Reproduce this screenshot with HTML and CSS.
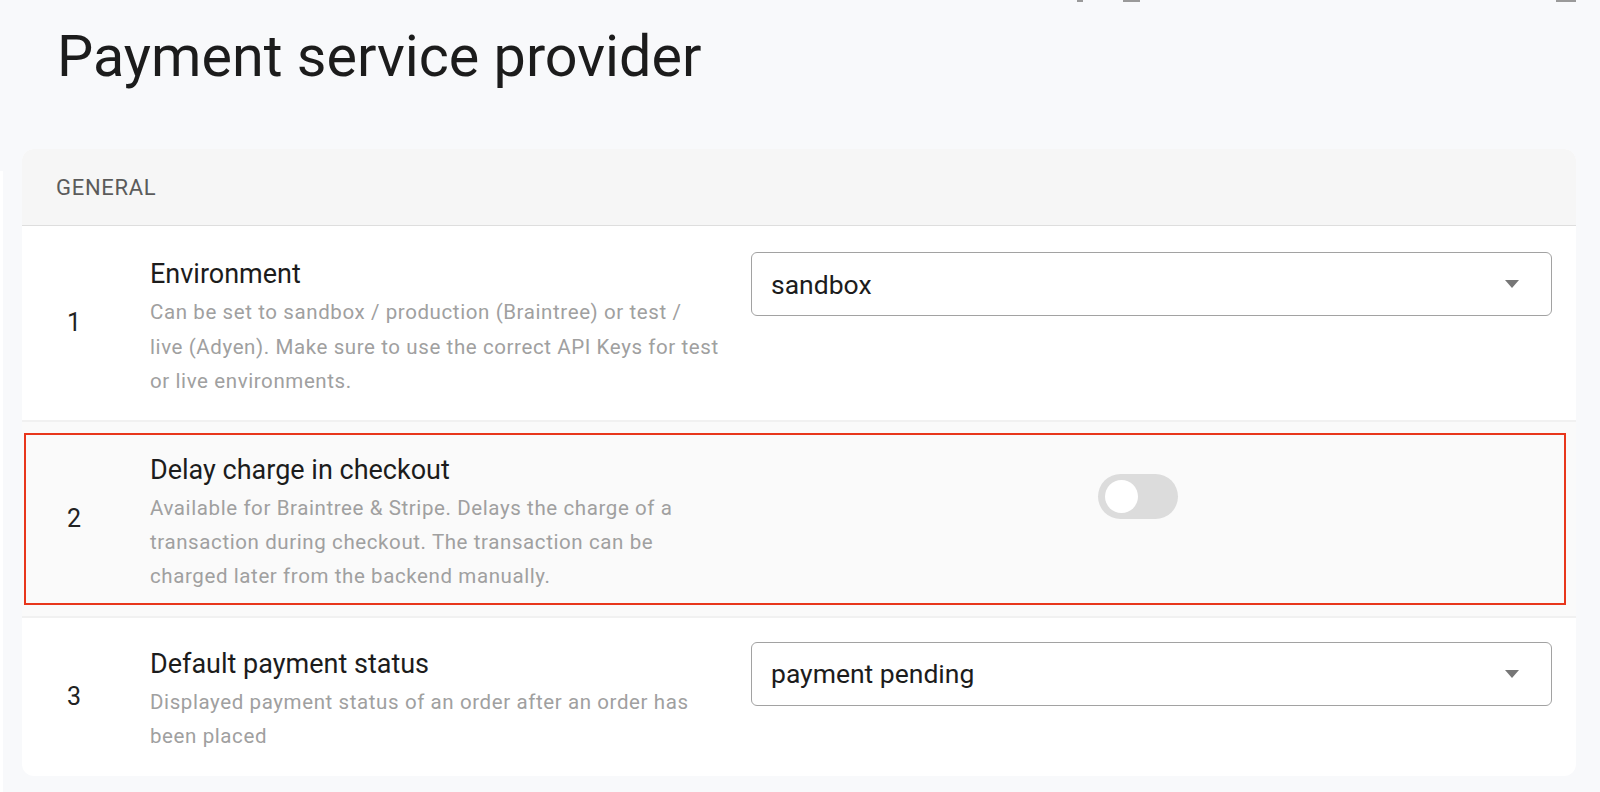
FILE: index.html
```html
<!DOCTYPE html>
<html lang="en">
<head>
  <meta charset="UTF-8">
  <title>Payment service provider</title>
  <link rel="stylesheet" href="styles.css">
</head>
<body>
  <div class="topbar">
    <span class="tb-dot"></span>
    <span class="tb-bell"></span>
    <span class="tb-menu"></span>
  </div>
  <div class="page">
    <div class="side-edge"></div>
    <main class="main">
      <h1 class="page-title">Payment service provider</h1>

      <section class="card">
        <div class="card-head">GENERAL</div>

        <div class="row row-first">
          <div class="num">1</div>
          <div class="info">
            <div class="label">Environment</div>
            <div class="desc">Can be set to sandbox / production (Braintree) or test /<br>live (Adyen). Make sure to use the correct API Keys for test or live environments.</div>
          </div>
          <div class="control">
            <div class="select">
              <span>sandbox</span>
              <span class="caret"></span>
            </div>
          </div>
        </div>

        <div class="row row-alt">
          <div class="highlight">
            <div class="num">2</div>
            <div class="info">
              <div class="label">Delay charge in checkout</div>
              <div class="desc">Available for Braintree &amp; Stripe. Delays the charge of a transaction during checkout. The transaction can be charged later from the backend manually.</div>
            </div>
            <div class="control control-toggle">
              <div class="toggle"><span class="knob"></span></div>
            </div>
          </div>
        </div>

        <div class="row row-last">
          <div class="num">3</div>
          <div class="info">
            <div class="label">Default payment status</div>
            <div class="desc">Displayed payment status of an order after an order has been placed</div>
          </div>
          <div class="control">
            <div class="select">
              <span>payment pending</span>
              <span class="caret"></span>
            </div>
          </div>
        </div>
      </section>
    </main>
  </div>
</body>
</html>
```

FILE: styles.css
```css
* { box-sizing: border-box; }
body { margin: 0; background: #f8f9fb; font-family: Roboto, "Liberation Sans", sans-serif; color: #1a1a1a; }

.topbar { display: flex; height: 2px; }
.topbar span { height: 2px; background: #9a9a9a; }
.tb-dot { width: 6px; margin-left: 1077px; }
.tb-bell { width: 17px; margin-left: 40px; }
.tb-menu { width: 20px; margin-left: 416px; }

.page { display: flex; }
.side-edge { width: 3px; margin-top: 169px; height: 621px; background: #fff; }
.main { flex: 1; padding: 0 24px 0 19px; }

.page-title { margin: 0; padding: 19px 0 0 35px; font-size: 57.5px; font-weight: 400; line-height: 72px; color: #1c1c1c; height: 147px; }

.card { background: #fff; border-radius: 12px; overflow: hidden; }
.card-head { background: #f6f6f6; height: 77px; display: flex; align-items: center; padding: 0 34px; font-size: 22px; color: #5b5b5b; letter-spacing: 0.7px; border-bottom: 1px solid #dedede; }

.row { display: flex; align-items: center; padding-right: 24px; border-bottom: 2px solid #f1f1f1; }
.row-first .info { padding-top: 32px; padding-bottom: 21px; }
.row-first .desc { line-height: 34.6px; }
.row-alt { background: #fafafa; padding: 11px 10px 11px 2px; }
.row-last { border-bottom: none; }
.row-last .info { padding-top: 30px; padding-bottom: 23px; }
.highlight { flex: 1; display: flex; align-items: center; border: 2px solid #e8361c; }
.highlight .info { padding-top: 19px; padding-bottom: 10px; }

.num { width: 128px; padding-left: 45px; font-size: 25px; color: #222; }
.highlight .num { width: 124px; padding-left: 41px; }
.info { width: 601px; padding-right: 26px; }
.label { font-size: 27px; line-height: 32px; color: #1c1c1c; }
.desc { font-size: 20.5px; line-height: 34px; color: #a0a0a0; letter-spacing: 0.6px; margin-top: 5px; }

.control { flex: 1; align-self: flex-start; margin-top: 26px; }
.row-last .control { margin-top: 24px; }
.control-toggle { margin-top: 39px; padding-left: 347px; }

.select { height: 64px; border: 1px solid #a2a2a2; border-radius: 6px; display: flex; align-items: center; justify-content: space-between; padding: 0 32px 0 19px; font-size: 26.5px; color: #1c1c1c; background: #fff; }
.caret { width: 0; height: 0; border-left: 7px solid transparent; border-right: 7px solid transparent; border-top: 8px solid #767676; }

.toggle { position: relative; width: 80px; height: 45px; border-radius: 23px; background: #dcdcdc; }
.knob { position: absolute; left: 7px; top: 6px; width: 33px; height: 33px; border-radius: 50%; background: #fff; }
```
